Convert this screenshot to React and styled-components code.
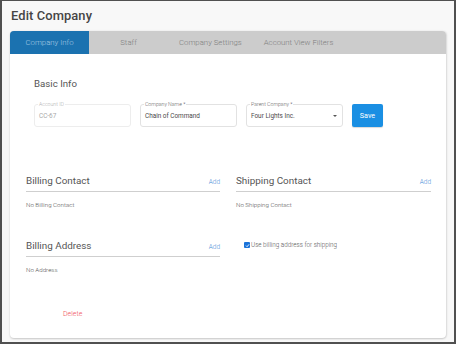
import { createGlobalStyle, styled } from "styled-components"

const Global = createGlobalStyle`
    html, body { margin: 0; padding: 0; }
    body {
        font-family: Roboto, "Liberation Sans", Arial, sans-serif;
        background: #fff;
    }
`

const Page = styled.div`
    width: 456px;
    height: 344px;
    box-sizing: border-box;
    border: solid #505050;
    border-width: 1px 2px 2px 2px;
    background: #f8f8f8;
    padding: 0 8px 0 8px;
    overflow: hidden;
`

const Title = styled.h1`
    margin: 0;
    padding: 7px 0 0 1px;
    height: 23px;
    font-size: 12.9px;
    font-weight: 500;
    color: #454545;
    letter-spacing: 0.1px;
`

const Card = styled.div`
    width: 436px;
    height: 307px;
    background: #fff;
    border-radius: 4px;
    box-shadow: 0 1px 2px rgba(0,0,0,0.18), 1px 0 2px rgba(0,0,0,0.08);
    display: flex;
    flex-direction: column;
`

const Tabs = styled.div`
    display: flex;
    flex: none;
    height: 23px;
    background: #cccccc;
    border-radius: 4px 4px 0 0;
    overflow: hidden;
`

const Tab = styled.div`
    min-width: 79px;
    padding: 0 11px;
    box-sizing: border-box;
    display: flex;
    align-items: center;
    justify-content: center;
    font-size: 7.8px;
    font-weight: 300;
    color: ${p => (p.$active ? "#a6c9e3" : "#7e7e7e")};
    background: ${p => (p.$active ? "#1b72b0" : "transparent")};
    &:first-child { padding: 0 15px; }
`

const Body = styled.div`
    padding: 0 15px 0 16px;
`

const BasicInfo = styled.div`
    padding: 23px 0 0 8px;
`

const SubTitle = styled.div`
    font-size: 9.7px;
    color: #555;
    line-height: 14px;
`

const FieldRow = styled.div`
    display: flex;
    gap: 8px;
    margin-top: 13px;
    align-items: center;
`

const Field = styled.div`
    position: relative;
    width: 97px;
    height: 23px;
    box-sizing: border-box;
    border: 1px solid ${p => (p.$disabled ? "#ededed" : "#e2e2e2")};
    border-radius: 3px;
    display: flex;
    align-items: center;
    padding: 0 4px;
    font-size: 6.4px;
    color: ${p => (p.$disabled ? "#a8a8a8" : "#4a4a4a")};
    & + & { margin-left: 1px; }
`

const FieldLabel = styled.span`
    position: absolute;
    top: -4px;
    left: 3px;
    padding: 0 1px;
    background: #fff;
    font-size: 5.2px;
    font-weight: 300;
    line-height: 7px;
    color: ${p => (p.$disabled ? "#b0b0b0" : "#666")};
`

const Caret = styled.span`
    position: absolute;
    right: 5px;
    top: 10px;
    width: 0;
    height: 0;
    border-left: 2.5px solid transparent;
    border-right: 2.5px solid transparent;
    border-top: 2.5px solid #555;
`

const SaveButton = styled.button`
    width: 31px;
    height: 23px;
    margin-left: 1px;
    border: none;
    border-radius: 2px;
    background: #1a8fe3;
    color: #fff;
    font-family: inherit;
    font-size: 7.2px;
    padding: 0;
    box-shadow: 0 1px 1px rgba(0,0,0,0.15);
`

const Sections = styled.div`
    display: grid;
    grid-template-columns: 194px 195px;
    column-gap: 16px;
    margin-top: 47px;
`

const Section = styled.div`
    height: 65px;
`

const SectionHead = styled.div`
    display: flex;
    justify-content: space-between;
    align-items: baseline;
    padding-bottom: 4px;
    border-bottom: 1px solid #cfcfcf;
`

const SectionTitle = styled.span`
    font-size: 9.9px;
    color: #555;
    line-height: 13px;
`

const AddLink = styled.span`
    font-size: 6.5px;
    font-weight: 300;
    color: #3f8ad6;
`

const Empty = styled.div`
    margin-top: 9px;
    font-size: 6.2px;
    font-weight: 300;
    color: #555;
`

const CheckRow = styled.label`
    display: flex;
    align-items: center;
    gap: 1px;
    padding: 2px 0 0 8px;
    font-size: 6.3px;
    font-weight: 300;
    color: #555;
`

const Box = styled.span`
    width: 6px;
    height: 6px;
    border-radius: 1px;
    background: #1a73d9;
    display: flex;
    align-items: center;
    justify-content: center;
`

const DeleteLink = styled.div`
    margin: 6px 0 0 37px;
    font-size: 7px;
    font-weight: 300;
    color: #f0505e;
`

const ContactSection = ({ title, empty }) => (
    <Section>
        <SectionHead>
            <SectionTitle>{title}</SectionTitle>
            <AddLink>Add</AddLink>
        </SectionHead>
        <Empty>{empty}</Empty>
    </Section>
)

const App = () => {
    const tabs = ["Company Info", "Staff", "Company Settings", "Account View Filters"]
    return (
        <>
            <Global />
            <Page>
                <Title>Edit Company</Title>
                <Card>
                    <Tabs>
                        {tabs.map((t, i) => (
                            <Tab key={t} $active={i === 0}>{t}</Tab>
                        ))}
                    </Tabs>
                    <Body>
                        <BasicInfo>
                            <SubTitle>Basic Info</SubTitle>
                            <FieldRow>
                                <Field $disabled>
                                    <FieldLabel $disabled>Account ID</FieldLabel>
                                    CC-67
                                </Field>
                                <Field>
                                    <FieldLabel>Company Name *</FieldLabel>
                                    Chain of Command
                                </Field>
                                <Field>
                                    <FieldLabel>Parent Company *</FieldLabel>
                                    Four Lights Inc.
                                    <Caret />
                                </Field>
                                <SaveButton>Save</SaveButton>
                            </FieldRow>
                        </BasicInfo>
                        <Sections>
                            <ContactSection title="Billing Contact" empty="No Billing Contact" />
                            <ContactSection title="Shipping Contact" empty="No Shipping Contact" />
                            <ContactSection title="Billing Address" empty="No Address" />
                            <div>
                                <CheckRow>
                                    <Box>
                                        <svg width="5" height="5" viewBox="0 0 10 10">
                                            <path d="M2 5.2 L4.2 7.4 L8.2 2.6" fill="none" stroke="#fff" strokeWidth="1.8" />
                                        </svg>
                                    </Box>
                                    Use billing address for shipping
                                </CheckRow>
                            </div>
                        </Sections>
                        <DeleteLink>Delete</DeleteLink>
                    </Body>
                </Card>
            </Page>
        </>
    )
}

export default App
